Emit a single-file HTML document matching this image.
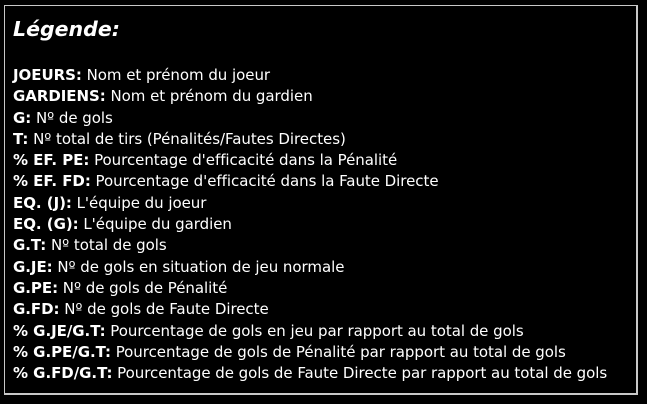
<!DOCTYPE html>
<html><head><meta charset="utf-8"><style>
html,body{margin:0;padding:0;background:#000;width:647px;height:404px;overflow:hidden}
.box{position:absolute;left:4px;top:5px;width:631px;height:387px;border:1px solid #c8c8c8;border-right:2px solid #c8c8c8;border-bottom:2px solid #c8c8c8}
h1{position:absolute;left:8px;top:11px;margin:0;font:italic bold 20.5px "DejaVu Sans",sans-serif;color:#fff}
.l{position:absolute;left:8px;top:59px;font:15px/21.3px "DejaVu Sans",sans-serif;color:#fff;white-space:nowrap;letter-spacing:-0.04px}
b{font-weight:bold}
</style></head><body>
<div class="box">
<h1>Légende:</h1>
<div class="l">
<b>JOEURS:</b> Nom et prénom du joeur<br>
<b>GARDIENS:</b> Nom et prénom du gardien<br>
<b>G:</b> Nº de gols<br>
<b>T:</b> Nº total de tirs (Pénalités/Fautes Directes)<br>
<b>% EF. PE:</b> Pourcentage d'efficacité dans la Pénalité<br>
<b>% EF. FD:</b> Pourcentage d'efficacité dans la Faute Directe<br>
<b>EQ. (J):</b> L'équipe du joeur<br>
<b>EQ. (G):</b> L'équipe du gardien<br>
<b>G.T:</b> Nº total de gols<br>
<b>G.JE:</b> Nº de gols en situation de jeu normale<br>
<b>G.PE:</b> Nº de gols de Pénalité<br>
<b>G.FD:</b> Nº de gols de Faute Directe<br>
<b>% G.JE/G.T:</b> Pourcentage de gols en jeu par rapport au total de gols<br>
<b>% G.PE/G.T:</b> Pourcentage de gols de Pénalité par rapport au total de gols<br>
<b>% G.FD/G.T:</b> Pourcentage de gols de Faute Directe par rapport au total de gols
</div>
</div>
</body></html>
